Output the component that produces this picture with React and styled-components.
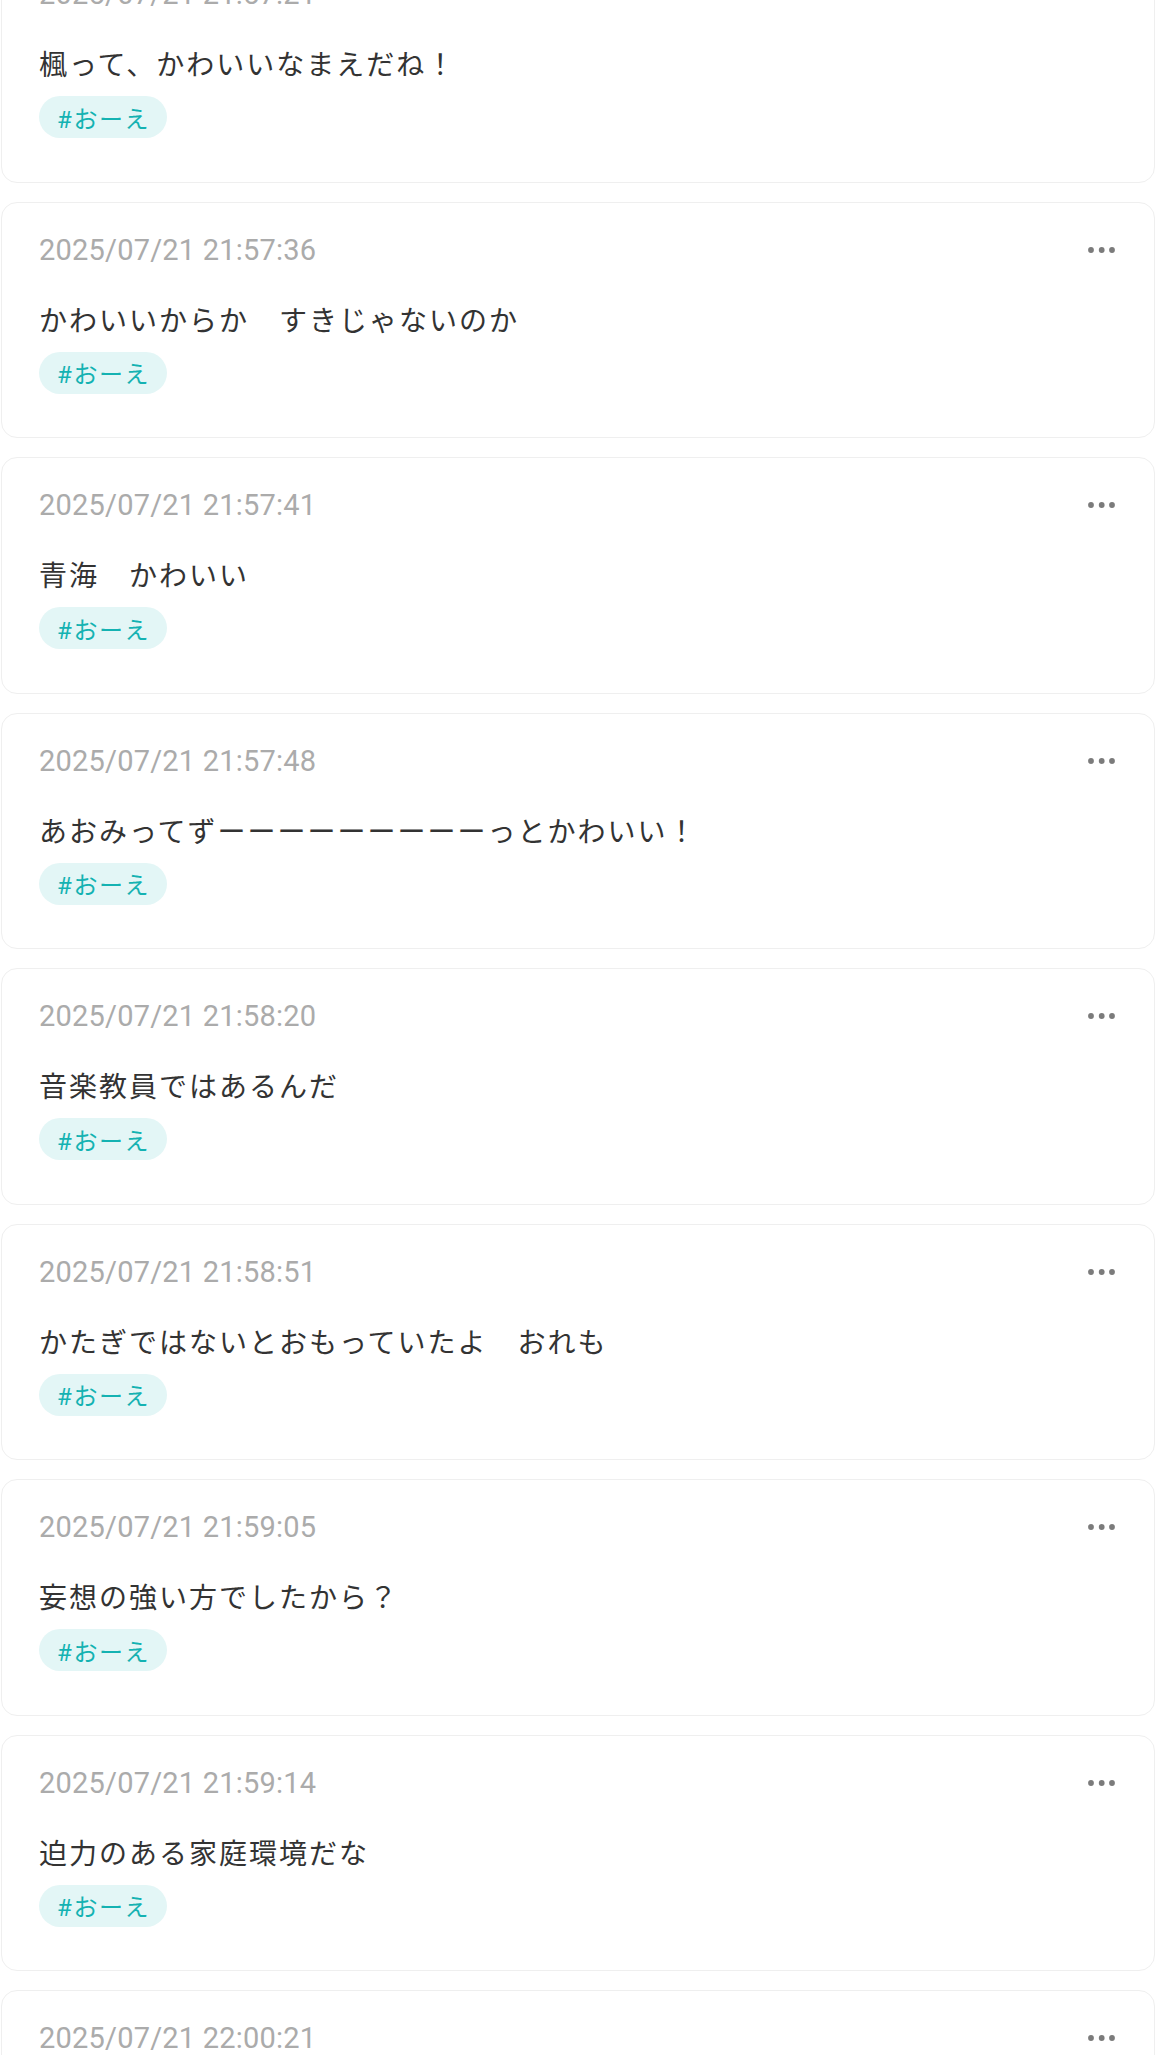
import React from "react";
import styled, { createGlobalStyle } from "styled-components";

const GlobalStyle = createGlobalStyle`
  html, body {
    margin: 0;
    padding: 0;
    background: #ffffff;
  }
  body {
    font-family: Roboto, "Noto Sans CJK JP", sans-serif;
    -webkit-font-smoothing: antialiased;
  }
  * { box-sizing: border-box; }
`;

const Feed = styled.div`
  display: flex;
  flex-direction: column;
  gap: 19px;
  padding: 0 1px;
  margin-top: -54px;
`;

const Card = styled.article`
  background: #ffffff;
  border: 1px solid #efefef;
  border-radius: 16px;
  padding: 27px 38px 0 37px;
  display: flex;
  flex-direction: column;
  height: 236.5px;
`;

const Header = styled.div`
  display: flex;
  align-items: center;
  justify-content: space-between;
  height: 40px;
`;

const Timestamp = styled.time`
  font-family: Roboto, sans-serif;
  font-size: 29px;
  line-height: 40px;
  color: #ababab;
  letter-spacing: 0.2px;
`;

const MenuButton = styled.button`
  border: none;
  background: none;
  padding: 0;
  width: 30px;
  height: 40px;
  display: flex;
  align-items: center;
  justify-content: center;
  margin-right: -1px;
  cursor: pointer;
`;

const Message = styled.p`
  margin: 28px 0 0;
  font-family: "Noto Sans CJK JP", sans-serif;
  font-size: 28px;
  line-height: 42px;
  letter-spacing: 2px;
  color: #333333;
  white-space: pre;
`;

const Tags = styled.div`
  display: flex;
  gap: 10px;
  margin-top: 12px;
`;

const Tag = styled.span`
  display: inline-flex;
  align-items: center;
  height: 42px;
  padding: 0 17px 0 18px;
  border-radius: 21px;
  background: #e3f6f6;
  color: #14b2b2;
  font-family: Roboto, "Noto Sans CJK JP", sans-serif;
  font-size: 24px;
  letter-spacing: 1.6px;
`;

const Dots = () => (
  <svg width="30" height="8" viewBox="0 0 30 8" aria-hidden="true">
    <circle cx="4" cy="4" r="2.9" fill="#7b7b7b" />
    <circle cx="14.7" cy="4" r="2.9" fill="#7b7b7b" />
    <circle cx="25" cy="4" r="2.9" fill="#7b7b7b" />
  </svg>
);

const posts = [
  { time: "2025/07/21 21:57:21", text: "楓って、かわいいなまえだね！" },
  { time: "2025/07/21 21:57:36", text: "かわいいからか　すきじゃないのか" },
  { time: "2025/07/21 21:57:41", text: "青海　かわいい" },
  { time: "2025/07/21 21:57:48", text: "あおみってずーーーーーーーーーっとかわいい！" },
  { time: "2025/07/21 21:58:20", text: "音楽教員ではあるんだ" },
  { time: "2025/07/21 21:58:51", text: "かたぎではないとおもっていたよ　おれも" },
  { time: "2025/07/21 21:59:05", text: "妄想の強い方でしたから？" },
  { time: "2025/07/21 21:59:14", text: "迫力のある家庭環境だな" },
  { time: "2025/07/21 22:00:21", text: "" },
];

export default function App() {
  return (
    <>
      <GlobalStyle />
      <Feed>
        {posts.map((p) => (
          <Card key={p.time}>
            <Header>
              <Timestamp>{p.time}</Timestamp>
              <MenuButton aria-label="メニュー">
                <Dots />
              </MenuButton>
            </Header>
            <Message>{p.text}</Message>
            <Tags>
              <Tag>#おーえ</Tag>
            </Tags>
          </Card>
        ))}
      </Feed>
    </>
  );
}
